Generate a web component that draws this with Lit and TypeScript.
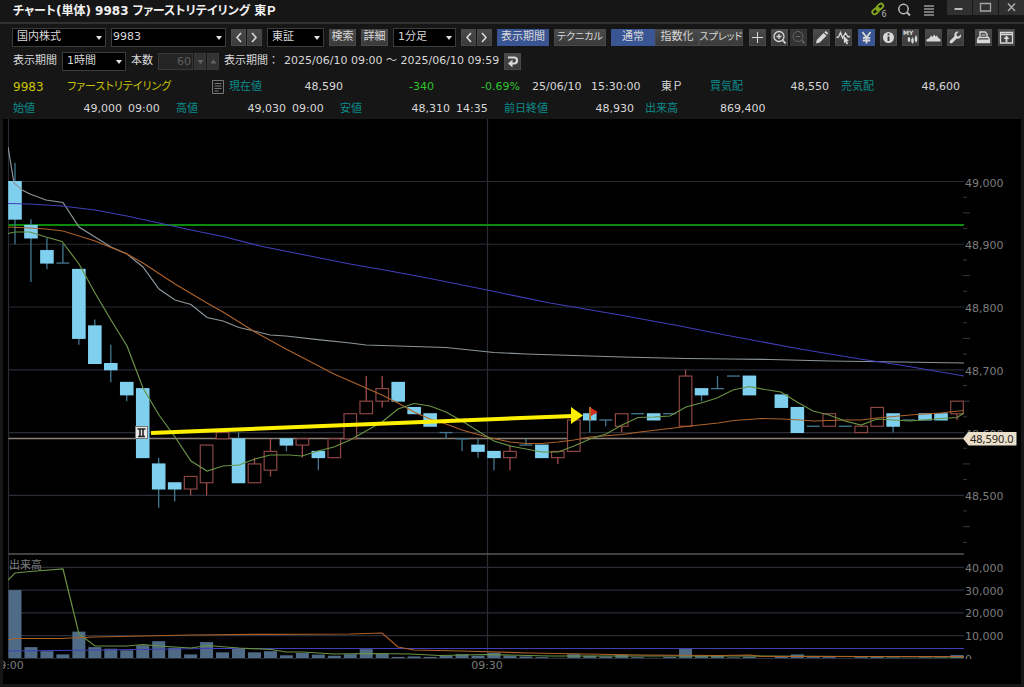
import { LitElement, html, svg, css } from "lit";
import { customElement } from "lit/decorators.js";

type Candle = [open: number, high: number, low: number, close: number, volume: number] | null;

const CANDLES: Candle[] = [
  [49000, 49030, 48900, 48940, 30000], [48930, 48940, 48840, 48910, 5000],
  [48890, 48910, 48860, 48870, 3200], [48870, 48900, 48870, 48870, 1800],
  [48860, 48860, 48740, 48750, 11800], [48770, 48780, 48710, 48710, 5000],
  [48710, 48740, 48680, 48700, 4300], [48680, 48680, 48650, 48660, 3600],
  [48670, 48670, 48560, 48560, 5800], [48550, 48560, 48480, 48510, 7600],
  [48520, 48520, 48490, 48510, 4700], [48510, 48530, 48500, 48530, 1800],
  [48520, 48580, 48500, 48580, 7200], [48590, 48600, 48590, 48600, 2700],
  [48590, 48600, 48520, 48520, 4500], [48520, 48560, 48520, 48550, 2700],
  [48540, 48590, 48530, 48570, 3200], [48590, 48590, 48570, 48580, 1400],
  [48580, 48590, 48560, 48590, 2400], [48570, 48570, 48540, 48560, 1700],
  [48560, 48590, 48560, 48590, 1200], [48590, 48630, 48590, 48630, 1900],
  [48630, 48690, 48630, 48650, 4100], [48650, 48690, 48640, 48670, 2300],
  [48680, 48680, 48650, 48650, 700], [48640, 48640, 48630, 48630, 900],
  [48630, 48630, 48610, 48610, 700], [48600, 48600, 48590, 48600, 1200],
  [48590, 48590, 48570, 48590, 1900], [48580, 48590, 48560, 48570, 1200],
  [48570, 48570, 48540, 48560, 2500], [48560, 48580, 48540, 48570, 1200],
  [48580, 48590, 48580, 48580, 900], [48580, 48580, 48560, 48560, 600],
  [48560, 48570, 48550, 48570, 300], [48570, 48620, 48570, 48620, 1900],
  [48630, 48640, 48600, 48620, 1200], [48620, 48620, 48610, 48620, 900],
  [48610, 48630, 48600, 48630, 1700], [48630, 48630, 48630, 48630, 600],
  [48630, 48630, 48620, 48620, 300], [48630, 48630, 48630, 48630, 700],
  [48610, 48700, 48610, 48690, 4400], [48670, 48670, 48650, 48660, 1200],
  [48670, 48690, 48670, 48670, 1300], [48690, 48690, 48690, 48690, 500],
  [48690, 48690, 48660, 48660, 800], null,
  [48660, 48660, 48640, 48640, 700], [48640, 48640, 48600, 48600, 1800],
  [48610, 48610, 48610, 48610, 600], [48610, 48630, 48610, 48630, 600],
  [48610, 48610, 48610, 48610, 200], [48600, 48610, 48600, 48610, 600],
  [48610, 48640, 48610, 48640, 700], [48630, 48630, 48600, 48610, 500],
  [48620, 48620, 48620, 48620, 300], [48630, 48630, 48620, 48620, 500],
  [48630, 48630, 48620, 48620, 500], [48630, 48650, 48620, 48650, 1500],
];

const LINES = [
  { cls: "vwap", pts: "8,147 14,183 22,190 30,194 46,200 63,202.5 79,227 95,237 111,247 127,254 143,267 159,289 175,300 191,304.5 207,317.5 223,321 239,327.5 254,331 270,335 286,336 318,339.7 350,343 366,345 382,345.5 430,347 446,347.5 470,350 494,352.5 526,354 558,355 590,356 622,357 686,358.5 730,359 770,359.5 830,361 900,362 964,363" },
  { cls: "long", pts: "8,203.5 30,204 62,206 95,210 127,216 159,223 191,230 223,236.5 260,246 310,256 350,264 390,271 430,278.5 487,290 550,303 620,315 680,326 720,334 800,349 860,359 900,365 964,376" },
  { cls: "mid", pts: "8,227 30,228 46,229 63,231 95,241 127,254 143,263 175,284 207,303 223,312 255,332 286,349 334,374 366,388 382,395 398,403 414,412 430,419 446,424 462,430 487,437 510,442 526,443.5 542,443.5 558,442 574,440 590,437 622,434.5 640,432 686,426.5 718,423 734,420.5 762,418.5 782,419 800,420 814,421 845,420 861,420 877,418 910,415 940,413 964,410.5" },
  { cls: "short", pts: "8,233.5 15,232 30,232 46,237 62,241.5 79,264 95,293 111,320 127,346 143,388 159,415 175,437 191,461 207,471 223,466 239,465 255,459 270,455 290,455 302,456 318,451 334,447 350,440 366,431 382,422 398,409 414,403.5 430,406 446,412 462,421 478,431 494,441 510,446 526,449 542,452 558,452 574,446 590,439 606,434 622,425 638,417.5 654,417 670,416 686,407 701,403 717,398 733,390 749,386.5 765,389.5 781,392 797,402 813,411 829,415 845,421 861,425 877,419 893,420 910,421 941,418.5 957,417.5 964,413" },
  { cls: "long", pts: "8,651 100,650 207,648.5 964,648.5" },
  { cls: "short", pts: "8,580 15,573 30,571.5 63,569 79,634 95,646 127,646 143,644.5 159,646 191,648 207,645.5 239,648 271,649.5 286,652 303,652 334,654 366,653.5 410,654 440,655.5 487,654.5 550,656 750,656 964,657" },
  { cls: "mid", pts: "8,640 15,638.5 60,638.5 95,637 143,636 191,635 270,634.3 350,634 382,633 398,647 414,650 462,651 530,653 640,655 720,655.5 750,655 762,656.5 964,656.5" },
];

const STEP = 15.966;
const LEFT = 8.5;
const RIGHT = 964;
const yPrice = (p: number) => 181.5 + (49000 - p) * 0.6276;
const yVolume = (v: number) => 658.5 - v * 0.00228;
const xCandle = (i: number) => 15 + i * STEP;

@customElement("price-chart")
export class PriceChart extends LitElement {
  static styles = css`
    :host { display: block; background: #000; }
    svg { display: block; width: 100%; height: auto; }
    text { font: 11px/1 "DejaVu Sans", "Noto Sans CJK JP", sans-serif; fill: #7c7c7c; }
    .grid { stroke: #2a2d36; stroke-width: 1.2; }
    .tick { stroke: #34373d; }
    .split { stroke: #565656; stroke-width: 1.5; }
    .prev { stroke: #0b8a0b; stroke-width: 2; }
    .last { stroke: #8a8078; stroke-width: 1.6; }
    .bar { fill: #4f6b86; }
    .down { fill: #7fd0ee; }
    .wick-down, .flat { stroke: #42788f; stroke-width: 1.3; }
    .up { fill: #000; stroke: #8c4644; stroke-width: 1.2; }
    .wick-up { stroke: #a04c4a; stroke-width: 1.3; }
    polyline { fill: none; stroke-width: 1.2; }
    .vwap { stroke: #8c969c; }
    .long { stroke: #423fb8; }
    .mid { stroke: #ac622a; }
    .short { stroke: #6a9244; }
    .arrow { stroke: #fff000; stroke-width: 4; }
    .head { fill: #fff000; }
    .tag { fill: #e9dfca; }
    .tag-text { font: 11px/1 "Noto Sans", sans-serif; fill: #2b2620; }
    .pole { fill: #b0712c; }
    .flag { fill: #d22f22; }
    .pin { fill: #e8e8e8; stroke: #777; }
    .pin-mark { stroke: #222; stroke-width: 1.6; fill: none; }
  `;

  private candle(c: Candle, i: number) {
    if (!c) return null;
    const [o, h, l, cl] = c;
    const x = xCandle(i);
    const top = yPrice(Math.max(o, cl));
    const bottom = yPrice(Math.min(o, cl));
    if (o === cl) {
      return svg`<line class="flat" x1=${x - 6.5} x2=${x + 6.5} y1=${top} y2=${top} />
        <line class="wick-down" x1=${x} x2=${x} y1=${yPrice(h)} y2=${yPrice(l)} />`;
    }
    const up = cl > o;
    return svg`<line class=${up ? "wick-up" : "wick-down"} x1=${x} x2=${x} y1=${yPrice(h)} y2=${yPrice(l)} />
      <rect class=${up ? "up" : "down"} x=${x - (up ? 6.3 : 6.8)} y=${top - (up ? 0 : 0.5)}
        width=${up ? 12.6 : 13.6} height=${bottom - top + (up ? 0 : 1)} />`;
  }

  render() {
    const prices = [49000, 48900, 48800, 48700, 48600, 48500];
    const volumes = [40000, 30000, 20000, 10000];
    const ticks: number[] = [];
    for (let p = 48975; p > 48420; p -= 25) if (p % 100) ticks.push(p);
    const label = (n: number) => n.toLocaleString("en-US");
    return html`<svg viewBox="3 119 1018 565" role="img" aria-label="9983 1分足チャート">
      <defs>
        <clipPath id="plot"><rect x="8" y="119" width="956" height="540" /></clipPath>
        <clipPath id="axis"><rect x="960" y="119" width="61" height="540" /></clipPath>
      </defs>
      ${prices.map((p) => svg`<line class="grid" x1=${LEFT} x2=${RIGHT} y1=${yPrice(p)} y2=${yPrice(p)} />`)}
      ${volumes.map((v) => svg`<line class="grid" x1=${LEFT} x2=${RIGHT} y1=${yVolume(v)} y2=${yVolume(v)} />`)}
      <line class="grid" x1=${LEFT} x2=${LEFT} y1="119" y2="658" />
      <line class="grid" x1="487.5" x2="487.5" y1="119" y2="658" />
      <line class="grid" x1=${LEFT} x2=${RIGHT} y1="658.5" y2="658.5" />
      ${ticks.map((p) => svg`<line class="tick" x1="963" x2=${p % 50 ? 967 : 970} y1=${yPrice(p)} y2=${yPrice(p)} />`)}
      <line class="split" x1=${LEFT} x2=${RIGHT} y1="554" y2="554" />
      <text x="9" y="569">出来高</text>
      <g clip-path="url(#plot)">
        <line class="prev" x1=${LEFT} x2=${RIGHT} y1="225" y2="225" />
        ${CANDLES.map((c, i) => c && svg`<rect class="bar" x=${xCandle(i) - 6.5} y=${yVolume(c[4])} width="13" height=${658 - yVolume(c[4])} />`)}
        <line class="last" x1=${LEFT} x2=${RIGHT} y1="438.5" y2="438.5" />
        ${CANDLES.map((c, i) => this.candle(c, i))}
        ${LINES.map((l) => svg`<polyline class=${l.cls} points=${l.pts} />`)}
      </g>
      ${prices.map((p) => svg`<text x="965" y=${yPrice(p) + 5}>${label(p)}</text>`)}
      ${volumes.map((v) => svg`<text x="965" y=${yVolume(v) + 4.5}>${label(v)}</text>`)}
      <g clip-path="url(#axis)"><text x="965" y="663">0</text></g>
      <text x="8" y="669" text-anchor="middle">09:00</text>
      <text x="487" y="669" text-anchor="middle">09:30</text>
      <path class="tag" d="M963 438.5 L968.500 432 H1016.500 V445.500 H968.500 Z" />
      <text class="tag-text" x="970" y="443">48,590.0</text>
      <rect class="pin" x="135.500" y="426.500" width="12" height="12" />
      <path class="pin-mark" d="M137.500 429h8M138 436.500h7M140 429v7M143 429v7" />
      <line class="arrow" x1="151" y1="433" x2="573" y2="416" />
      <path class="head" d="M571 407 L583 415.500 L571 424 Z" />
      <rect class="pole" x="589" y="407" width="2" height="13" />
      <path class="flag" d="M591 408 L598 412 L591 416 Z" />
    </svg>`;
  }
}

const ICONS = {
  prev: svg`<path class="s" d="M11 4 7 8.500 11 13" />`,
  next: svg`<path class="s" d="M6 4 10 8.500 6 13" />`,
  plus: svg`<path class="t" d="M8.500 3v11M3 8.500h11" />`,
  zoomIn: svg`<circle class="m" cx="8" cy="7.500" r="5" /><path class="m" d="M5.500 7.500h5M8 5v5" /><path class="w" d="m12 11.500 2.500 3" />`,
  zoomOut: svg`<circle class="t" cx="8" cy="7.500" r="5" /><path class="t" d="M5.500 7.500h5" /><path class="w" d="m12 11.500 2.500 3" />`,
  pencil: svg`<path class="f" d="M3 14.500 3.800 11 10.500 4l3 2.700L6.700 13.600ZM11.300 3.200l.8-.8q.8-.5 1.500.2l1 1q.6.700.1 1.400l-.6.800Z" />`,
  wave: svg`<path class="m" d="M1.500 8.500 3.500 8 5.500 3.500 7.500 9 10.500 4 13 8 15 7.500" /><path class="f" d="m8.500 6.500 5.500 5.500-2 .3 1.200 2.400-1.500.8-1.300-2.400-1.400 1.500Z" />`,
  yen: svg`<path class="w" d="M4.500 3 8.500 8.500 12.500 3M8.500 8v6.500M4.800 8.800h7.400M4.800 11.500h7.400" />`,
  info: svg`<circle class="f" cx="8.500" cy="8.500" r="5.500" /><path class="k" d="M8.500 7.500v4.500M8.500 4.500v1.800" />`,
  my: svg`<text x="1" y="6">MY</text><path class="m" d="M7 8v5M10.500 8.500v6M14 6.500v7" /><path class="f" d="M5.800 9h2.400v3H5.800ZM9.300 10h2.400v3.500H9.300ZM12.800 8h2.400v4h-2.400Z" />`,
  area: svg`<path class="f" d="M1.500 12.500v-2l3-1.500 1.500-2.500 1.500 1.500 1.500-2.500 1.500 2 1.500-1 1 2 2.500 2v2Z" />`,
  wrench: svg`<path class="f" d="M14 5.200 11.700 7.500 9.800 7 9.400 5l2.300-2.300Q9.300 2.200 7.900 4 6.900 5.400 7.500 7.300L2.800 12q-.8 1.200.2 2.100 1.100.9 2.200 0L9.800 9.500q1.900.5 3.300-.7 1.600-1.500.9-3.600Z" />`,
  print: svg`<path class="m" d="M5 8.500V3h5l2 2v3.500M3.500 8.500h10l1 2.500v2.500h-12V11Z" /><path class="f" d="M2.500 10.500h12v3h-12Z" /><path class="t" d="M6.500 6h4" />`,
  detach: svg`<path class="m" d="M2.500 3.500h12v10.500h-12ZM2.500 5.500h12" /><path class="w" d="M8.500 9v4" /><path class="f" d="M8.500 6.500 11.500 10h-6Z" />`,
  back: svg`<path class="b" d="M4 4.500h6q3 0 3 3t-3 3H7" /><path class="f" d="M8.500 6.500v8l-4.500-4Z" />`,
  up: svg`<path class="f" d="M5.500 10.500h6l-3-4Z" />`,
  down: svg`<path class="f" d="M5.500 7h6l-3 4Z" />`,
};

@customElement("app-root")
export class AppRoot extends LitElement {
  static styles = css`
    :host {
      display: block;
      box-sizing: border-box;
      background: #161616;
      color: #d8d8d8;
      font: 11px/16px "DejaVu Sans", "Noto Sans CJK JP", sans-serif;
      padding: 0 3px 3px;
      overflow: hidden;
      white-space: nowrap;
    }
    * { box-sizing: border-box; }
    .titlebar { display: flex; align-items: flex-start; height: 22px; margin-right: -3px; }
    .grip { width: 5px; height: 16px; margin: 3px 3px 0 2px;
      background: radial-gradient(circle, #555 35%, transparent 45%) 0 0 / 2px 2px; }
    h1 { margin: 0; font: bold 12px/22px "DejaVu Sans", "Noto Sans CJK JP", sans-serif; color: #f2f2f2; flex: 1; }
    h1, .name, .btn { font-feature-settings: "palt"; }
    .tools { display: flex; align-items: center; gap: 9px; height: 20px; margin-right: 10px; }
    .plain { border: 0; padding: 0; background: none; width: 16px; height: 18px; }
    .plain svg, .win svg { display: block; width: 100%; height: 100%; }
    .wins { display: flex; gap: 1px; }
    .win { border: 0; padding: 0; width: 25px; height: 15px; background: #303030; }
    .toolbar, .period { display: flex; align-items: center; gap: 5px; height: 20px; padding-left: 9px; }
    .toolbar { margin-top: 3px; padding-right: 6px; }
    .rule { height: 2px; background: #313131; margin: 0 -3px; }
    .period { margin-top: 4px; padding-left: 10px; }
    .joined { display: flex; gap: 1px; }
    .tabs { display: flex; }
    .pair { display: flex; gap: 2px; }
    .icons { display: flex; flex: 1; justify-content: space-between; margin: 0 6px 0 1px; }
    .end { display: flex; gap: 6px; }
    button, select, input { font: inherit; color: inherit; border-radius: 0; margin: 0; outline: 0; }
    .select { position: relative; display: flex; }
    .select::after { content: ""; position: absolute; right: 4px; top: 8px; border: 3px solid transparent;
      border-top: 4px solid #e4e4e4; border-bottom: 0; pointer-events: none; }
    select { appearance: none; width: 100%; height: 19px; padding: 0 0 0 4px; background: #000; border: 1px solid #3c3c3c; }
    .market { width: 94px; }
    .code { width: 115px; }
    .code select { padding-left: 1px; }
    .exchange { width: 57px; }
    .bars { width: 63px; }
    .span { width: 64px; }
    .btn { height: 17px; padding: 0; border: 1px solid #484848; background: linear-gradient(#4a4a4a, #3a3a3a);
      display: flex; align-items: center; justify-content: center; }
    .w27 { width: 27px; }
    .w44 { width: 44px; }
    .w52 { width: 52px; }
    .kana { font-size: 10px; }
    .on { background: #3a5593; border-color: #3a5593; }
    .icon { width: 17px; }
    .nav { width: 15px; }
    .step { width: 12px; }
    .btn svg { display: block; width: 17px; height: 17px; flex: none; }
    .btn:disabled { color: #666; border-color: #383838; background: #333; }
    .t { fill: none; stroke: currentColor; stroke-width: 1; }
    .m { fill: none; stroke: currentColor; stroke-width: 1.3; }
    .s { fill: none; stroke: currentColor; stroke-width: 1.6; }
    .w { fill: none; stroke: currentColor; stroke-width: 1.8; }
    .b { fill: none; stroke: currentColor; stroke-width: 2.2; }
    .k { fill: none; stroke: #333; stroke-width: 1.8; }
    .f { fill: currentColor; }
    .btn text { font: bold 6px "DejaVu Sans", sans-serif; fill: currentColor; }
    .count { display: flex; gap: 1px; }
    input { width: 35px; height: 17px; padding: 0 1px; text-align: right; background: #242424;
      border: 1px solid #383838; color: #5e5e5e; appearance: textfield; }
    .period .joined { gap: 0; }
    .quote { display: grid; align-items: center; height: 22px; padding-left: 10px; }
    .q1 { margin-top: 5px; grid-template-columns: 54px 145px 17px 44px 70px 91px 86px 12px 59px 70px 49px 44px 75px 12px 44px 75px 1fr; }
    .q2 { height: 21px; grid-template-columns: 70px 39px 6px 48px 71px 39px 6px 48px 71px 39px 6px 48px 71px 59px 11px 75px 45px 1fr; }
    .name { color: #c9c400; }
    .sym { font-size: 12px; }
    .key { color: #0b8c8c; }
    .neg { color: #2fc42f; }
    .num { text-align: right; }
    .doc { display: block; width: 12px; height: 14px; }
  `;

  private icon(key: keyof typeof ICONS, label: string, cls = "icon", disabled = false) {
    return html`<button class="btn ${cls}" aria-label=${label} ?disabled=${disabled}>
      <svg viewBox="0 0 17 17">${ICONS[key]}</svg></button>`;
  }

  private select(cls: string, label: string, value: string) {
    return html`<span class="select ${cls}"><select aria-label=${label}><option>${value}</option></select></span>`;
  }

  render() {
    return html`
      <header class="titlebar">
        <span class="grip"></span>
        <h1>チャート(単体) 9983 ファーストリテイリング 東Ｐ</h1>
        <div class="tools">
          <button class="plain" aria-label="リンク 6">
            <svg viewBox="0 0 16 18"><g fill="none" stroke="#84a81c" stroke-width="1.800"><rect x="5.500" y="3.500" width="7" height="4.500" rx="2.200" transform="rotate(-42 9 5.700)" /><rect x="1" y="8" width="7" height="4.500" rx="2.200" transform="rotate(-42 4.500 10.200)" /><path d="M5 9.500 8.500 6.500" /></g><text x="10.500" y="16" font-size="8" fill="#b5b5b5">6</text></svg>
          </button>
          <button class="plain" aria-label="検索">
            <svg viewBox="0 0 16 18"><circle cx="7.500" cy="8" r="4.700" fill="none" stroke="#bbb" stroke-width="1.500" /><path d="m11 11.500 3 3" stroke="#bbb" stroke-width="2" /></svg>
          </button>
          <button class="plain" aria-label="メニュー">
            <svg viewBox="0 0 16 18"><path d="M3 5h10M3 8h10M3 11h10M3 14h10" stroke="#999" stroke-width="1.300" /></svg>
          </button>
        </div>
        <div class="wins">
          <button class="win" aria-label="最小化"><svg viewBox="0 0 25 15"><path d="M7.500 9h8" stroke="#bbb" stroke-width="2" /></svg></button>
          <button class="win" aria-label="最大化"><svg viewBox="0 0 25 15"><path d="M7.500 3.500h10v7.500h-10Z" fill="none" stroke="#a5a5a5" stroke-width="1.300" /></svg></button>
          <button class="win" aria-label="閉じる"><svg viewBox="0 0 25 15"><path d="m9 3.500 7 7.500m0-7.500-7 7.500" stroke="#aaa" stroke-width="1.500" /></svg></button>
        </div>
      </header>
      <div class="rule"></div>
      <div class="toolbar">
        ${this.select("market", "市場", "国内株式")}
        ${this.select("code", "銘柄コード", "9983")}
        <span class="joined">${this.icon("prev", "前の銘柄", "nav")}${this.icon("next", "次の銘柄", "nav")}</span>
        ${this.select("exchange", "取引所", "東証")}
        <button class="btn w27">検索</button>
        <button class="btn w27">詳細</button>
        ${this.select("bars", "足種", "1分足")}
        <span class="joined">${this.icon("prev", "前の足", "nav")}${this.icon("next", "次の足", "nav")}</span>
        <button class="btn w52 on">表示期間</button>
        <button class="btn w52 kana">テクニカル</button>
        <span class="tabs">
          <button class="btn w44 on">通常</button><button class="btn w44">指数化</button><button class="btn w44 kana">スプレッド</button>
        </span>
        <span class="icons">
          ${this.icon("plus", "十字線")}
          <span class="pair">${this.icon("zoomIn", "拡大")}${this.icon("zoomOut", "縮小", "icon", true)}</span>
          ${this.icon("pencil", "描画")}
          ${this.icon("wave", "トレンド")}
          ${this.icon("yen", "円", "icon on")}
          ${this.icon("info", "情報")}
          ${this.icon("my", "MYチャート")}
          ${this.icon("area", "価格帯")}
          ${this.icon("wrench", "設定")}
        </span>
        <span class="end">${this.icon("print", "印刷")}${this.icon("detach", "切り離し")}</span>
      </div>
      <div class="period">
        <label for="span">表示期間</label>
        <span class="select span"><select id="span"><option>1時間</option></select></span>
        <label for="count">本数</label>
        <span class="count">
          <input id="count" type="text" inputmode="numeric" value="60" disabled />
          ${this.icon("down", "減らす", "step", true)}${this.icon("up", "増やす", "step", true)}
        </span>
        <span>表示期間：</span>
        <span>2025/06/10 09:00 ～ 2025/06/10 09:59</span>
        ${this.icon("back", "戻す")}
      </div>
      <div class="quote q1">
        <span class="name sym">9983</span><span class="name">ファーストリテイリング</span>
        <svg class="doc" viewBox="0 0 12 14"><path d="M.5.500h11v13H.500ZM2.500 3.500h7M2.500 6h7M2.500 8.500h7M2.500 11h4" fill="none" stroke="#777" /></svg>
        <span class="key">現在値</span><span class="num">48,590</span>
        <span class="num neg">-340</span><span class="num neg">-0.69%</span><span></span>
        <span>25/06/10</span><span>15:30:00</span><span>東Ｐ</span>
        <span class="key">買気配</span><span class="num">48,550</span><span></span>
        <span class="key">売気配</span><span class="num">48,600</span>
      </div>
      <div class="quote q2">
        <span class="key">始値</span><span class="num">49,000</span><span></span><span>09:00</span>
        <span class="key">高値</span><span class="num">49,030</span><span></span><span>09:00</span>
        <span class="key">安値</span><span class="num">48,310</span><span></span><span>14:35</span>
        <span class="key">前日終値</span><span class="num">48,930</span><span></span>
        <span class="key">出来高</span><span class="num">869,400</span>
      </div>
      <price-chart></price-chart>
    `;
  }
}
